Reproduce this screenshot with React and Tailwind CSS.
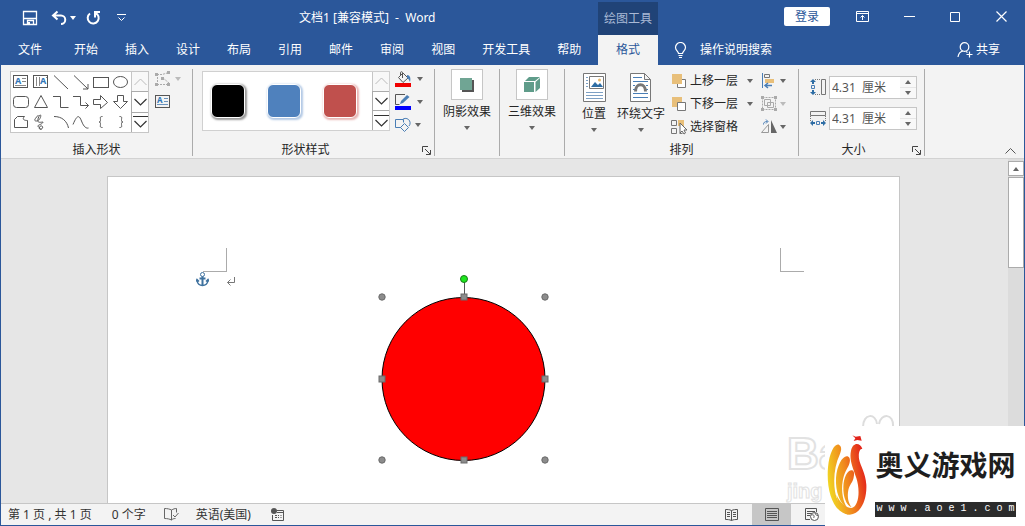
import React from 'react';
import clsx from 'clsx';

const tabs = ['开始', '插入', '设计', '布局', '引用', '邮件', '审阅', '视图', '开发工具', '帮助'];

const Icon = ({ w = 16, h = 16, className, children }) => (
    <svg
        width={w}
        height={h}
        viewBox={`0 0 ${w} ${h}`}
        fill="none"
        stroke="currentColor"
        className={clsx('shrink-0', className)}
        aria-hidden="true"
    >
        {children}
    </svg>
);

const Caret = ({ className = 'text-[#666]' }) => (
    <Icon w={6} h={4} className={className}>
        <path d="M0 0h6L3 4z" fill="currentColor" stroke="none" />
    </Icon>
);

const shapes = [
    { name: '文本框', art: <><rect x="2.5" y="3.5" width="14" height="12" /><text x="4" y="12" fontSize="9" fontWeight="bold" fill="#2e75b6" stroke="none">A</text><path d="M11 6.5h4M11 9.5h4M4 13.5h11" stroke="#888" /></> },
    { name: '竖排文本框', art: <><rect x="2.5" y="3.5" width="14" height="12" /><text x="9" y="12" fontSize="9" fontWeight="bold" fill="#2e75b6" stroke="none">A</text><path d="M5.5 5v9M8.5 5v9M15.5 5v1" stroke="#888" /></> },
    { name: '直线', art: <path d="M3 3.5 17 17" /> },
    { name: '箭头', art: <path d="M3 3.5 17 17M17 12v5h-5" /> },
    { name: '矩形', art: <rect x="2.5" y="5.5" width="15" height="10" /> },
    { name: '椭圆', art: <ellipse cx="9.5" cy="10" rx="7" ry="5.5" /> },
    { name: '圆角矩形', art: <rect x="2.5" y="4.5" width="15" height="11" rx="3" /> },
    { name: '三角形', art: <path d="M10 3.5 16.5 15.5h-13z" /> },
    { name: '肘形连接符', art: <path d="M2 4.5h7.5v11h8" /> },
    { name: '肘形箭头', art: <path d="M2 4.5h7.5v9h8M14.5 10.5l3 3-3 3" /> },
    { name: '右箭头', art: <path d="M2.5 7.5h7v-4l7 7-7 6v-4h-7z" /> },
    { name: '下箭头', art: <path d="M6.500 3.500h6v6h4l-7 7-7-7h4z" /> },
    { name: '任意多边形', art: <path d="M3.500 7.500 6.500 4.500h7c-3 3 0 4 3 4v7h-13z" /> },
    { name: '自由曲线', art: <path d="M7.500 3c-4 4-5 6-2 6s5-5 4-6-4 6-2 7 6-1 4 1-6 2-4 4 3 3 4 1-2-3-3-1 1 3 2 2" /> },
    { name: '弧形', art: <path d="M3 4.500C11 4.500 16 9 17.500 16" /> },
    { name: '曲线', art: <path d="M2 12.500C6 3 8 2.500 10.500 9s5 7.500 7 7" /> },
    { name: '左大括号', art: <path d="M11.500 4.500c-3 0-2 1-2 4 0 1-.5 1.500-1.500 1.500 1 0 1.500.5 1.500 1.500 0 3-1 4 2 4" /> },
    { name: '右大括号', art: <path d="M8.500 4.500c3 0 2 1 2 4 0 1 .5 1.500 1.500 1.500-1 0-1.500.5-1.500 1.500 0 3 1 4-2 4" /> },
];

const swatches = [
    { name: '黑色', className: 'bg-black shadow-[1px_1px_2px_1px_#999]' },
    { name: '蓝色', className: 'bg-[#4f81bd] shadow-[1px_1px_2px_1px_#b3c9e5]' },
    { name: '红色', className: 'bg-[#c0504d] shadow-[1px_1px_2px_1px_#e8b5b4]' },
];

const GalleryScroll = () => (
    <div className="flex w-[17px] flex-col">
        <button aria-label="上一行" className="flex flex-1 items-center justify-center border-l border-[#c6c6c6] bg-[#f8f8f8] text-[#bbb]">
            <Icon w={13} h={8}><path d="M.5 7 6.500 1l6 6" /></Icon>
        </button>
        <button aria-label="下一行" className="flex flex-1 items-center justify-center border border-r-0 border-[#ababab] text-[#333]">
            <Icon w={13} h={8}><path d="M.5 1 6.500 7l6-6" strokeWidth="1.2" /></Icon>
        </button>
        <button aria-label="其他" className="flex flex-1 items-center justify-center border-l border-[#ababab] text-[#333]">
            <Icon w={15} h={14}><path d="M0 1.500h15M1.500 6l6 6 6-6" strokeWidth="1.2" /></Icon>
        </button>
    </div>
);

const Group = ({ label, launcher, className, contentClassName, children }) => (
    <section className={clsx('relative flex shrink-0 flex-col border-r border-[#ababab]', className)}>
        <div className={clsx('flex flex-1', contentClassName)}>{children}</div>
        {label && <h2 className={clsx('h-[13px] text-center leading-[13px]', launcher && 'pr-4')}>{label}</h2>}
        {launcher && (
            <button aria-label={`${label}设置`} className="absolute right-[3px] bottom-px text-[#444]">
                <Icon w={9} h={9}><path d="M.5 6V.5H6M3 3l5 5M8.500 4v4.500H4" /></Icon>
            </button>
        )}
    </section>
);

const EffectButton = ({ label, children }) => (
    <button className="flex w-full flex-col items-center">
        <span className="flex h-[31px] w-8 items-center justify-center border border-[#c6c6c6] bg-white">{children}</span>
        <span className="mt-1 leading-4">{label}</span>
        <span className="mt-1.5"><Caret /></span>
    </button>
);

const BigButton = ({ label, children }) => (
    <button className="flex flex-col items-center self-start pt-1">
        {children}
        <span className="mt-1 leading-4">{label}</span>
        <span className="mt-1.5"><Caret /></span>
    </button>
);

const SizeField = ({ id, label, icon }) => (
    <div className="flex items-center gap-[3px]">
        <label htmlFor={id} aria-label={label}>{icon}</label>
        <div className="flex h-[23px] w-[88px] border border-[#c6c6c6] bg-white">
            <input id={id} defaultValue="4.31  厘米" className="w-0 flex-1 pl-0.5 whitespace-pre text-[#555] outline-none" />
            <div className="flex w-[16px] flex-col bg-[#f8f8f8]">
                <button aria-label={`增大${label}`} className="flex flex-1 items-center justify-center"><Caret className="rotate-180 text-[#666]" /></button>
                <button aria-label={`减小${label}`} className="flex flex-1 items-center justify-center border-t border-[#e6e6e6]"><Caret /></button>
            </div>
        </div>
    </div>
);

const TitleBar = () => (
    <div className="flex h-[34px] text-white">
        <div className="flex w-[298px] items-center pl-[21px]">
            <button aria-label="保存">
                <Icon>
                    <path d="M1.500 1.500h13v13h-13zM1.500 8.500h13M5.500 14.500v-4h6v4" strokeWidth="1.3" />
                    <path d="M6 12h2v2.500H6z" fill="currentColor" stroke="none" />
                </Icon>
            </button>
            <button aria-label="撤消" className="ml-[13px]">
                <Icon w={17}><path d="M2 5.500h8a4 4 0 0 1 0 8.500M6.500 1.500l-4.500 4 4.500 4" strokeWidth="2" /></Icon>
            </button>
            <button aria-label="撤消选项" className="ml-0.5"><Caret className="text-white" /></button>
            <button aria-label="重做" className="ml-[9px]">
                <Icon><path d="M5 3.500a5.500 5.500 0 1 0 5.500-.5M10 7.500V2h5" strokeWidth="2" /></Icon>
            </button>
            <button aria-label="自定义快速访问工具栏" className="ml-4">
                <Icon w={9} h={8}><path d="M0 .5h9M1.500 3.500l3 3 3-3" /></Icon>
            </button>
        </div>
        <h1 className="flex flex-1 items-center whitespace-pre">文档1 [兼容模式]  -  Word</h1>
        <div className="flex w-[426px] items-start">
            <div className="mt-px flex h-[33px] w-[60px] items-center justify-center bg-[#204377] text-[#a9b9d5]">绘图工具</div>
            <div className="ml-auto flex h-[31px] items-center pr-[17px]">
                <button className="h-[19px] w-[46px] rounded-xs bg-white text-[#2b579a]">登录</button>
                <button aria-label="功能区显示选项" className="ml-[26px]">
                    <Icon w={13} h={11}><path d="M.5.500h12v10H.5zM.5 2.500h12M6.500 9V4.500M4.500 6.500l2-2 2 2" /></Icon>
                </button>
                <button aria-label="最小化" className="ml-[35px]"><Icon w={11} h={11}><path d="M0 5.500h11" /></Icon></button>
                <button aria-label="最大化" className="ml-[35px]"><Icon w={10} h={10}><path d="M.5.500h9v9h-9z" /></Icon></button>
                <button aria-label="关闭" className="ml-9"><Icon w={11} h={11}><path d="M.5.500l10 10M10.500.500l-10 10" strokeWidth="1.2" /></Icon></button>
            </div>
        </div>
    </div>
);

const TabBar = () => (
    <nav className="flex h-[30px] items-center text-white">
        <div className="flex flex-1 items-center pl-[17px]">
            <button className="mr-8 shrink-0">文件</button>
            <div className="flex shrink-0 gap-[27px]">
                {tabs.map((tab) => <button key={tab}>{tab}</button>)}
            </div>
        </div>
        <div className="flex h-full w-[426px] items-center">
            <button className="h-full w-[60px] bg-[#f3f3f3] text-[#2b579a]">格式</button>
            <button className="ml-4 flex items-center gap-[13px]">
                <Icon w={13} h={17}>
                    <path d="M4.500 11.500c0-2-3-3-3-6a5 5 0 0 1 10 0c0 3-3 4-3 6zM4.500 13.500h4M5 15.500h3" strokeWidth="1.2" />
                </Icon>
                <span>操作说明搜索</span>
            </button>
            <button className="mr-6 ml-auto flex items-center gap-[3px]">
                <Icon>
                    <circle cx="7.500" cy="5" r="4.300" strokeWidth="1.2" />
                    <path d="M1 15c.5-3.500 2.500-5.500 5-6M9 9.500l1.500 1M12.500 9.500v6M9.500 12.500h6" strokeWidth="1.2" />
                </Icon>
                共享
            </button>
        </div>
    </nav>
);

const ArrangeRow = ({ label, caret, children }) => (
    <button className="flex h-[23px] items-center">
        {children}
        <span className="ml-[3px] w-[57px] text-left">{label}</span>
        {caret && <Caret />}
    </button>
);

const Ribbon = () => (
    <div className="flex border-b border-[#d2d2d2] bg-[#f3f3f3] pt-1 pb-0.5 text-[#262626]">
        <Group label="插入形状" className="h-[87px] w-[192px]" contentClassName="pl-[9px]">
            <div className="mt-0.5 flex h-[62px] self-start border border-[#c6c6c6] bg-white">
                <div className="grid grid-cols-6">
                    {shapes.map((shape) => (
                        <button key={shape.name} aria-label={shape.name} className="size-5 text-[#555]">
                            <Icon w={20} h={20}>{shape.art}</Icon>
                        </button>
                    ))}
                </div>
                <GalleryScroll />
            </div>
            <div className="ml-1.5 flex flex-col gap-2 pt-0.5">
                <button aria-label="编辑形状" className="flex items-center gap-[3px] text-[#aaa]">
                    <Icon w={17}>
                        <path d="M2 3.500h5l7-2M2 13.500h12M2.500 3v10M8 7l6 5" strokeDasharray="2 1" />
                        <path d="M0 2h3v3H0zM12 0h3v3h-3zM0 12h3v3H0zM12 12h3v3h-3zM6 6h3v3H6z" fill="currentColor" stroke="none" />
                    </Icon>
                    <Caret className="text-[#bbb]" />
                </button>
                <button aria-label="绘制文本框" className="self-start text-[#555]">
                    <Icon w={15} h={13}>
                        <rect x=".5" y=".5" width="14" height="12" />
                        <text x="2" y="8" fontSize="8" fontWeight="bold" fill="#2e75b6" stroke="none">A</text>
                        <path d="M9 3.500h4M9 6.500h4M2 9.500h11" stroke="#6b93bd" />
                    </Icon>
                </button>
            </div>
        </Group>

        <Group label="形状样式" launcher className="w-[242px]" contentClassName="pl-[9px]">
            <div className="mt-0.5 flex h-[60px] self-start border border-[#d0d0d0] bg-white">
                <div className="flex w-[169px] items-center gap-[22px] pl-2">
                    {swatches.map((s) => (
                        <button key={s.name} aria-label={s.name} className={clsx('size-[34px] rounded-md border border-white', s.className)} />
                    ))}
                </div>
                <GalleryScroll />
            </div>
            <div className="ml-[5px] flex flex-col gap-[7px] pt-0.5">
                <button aria-label="形状填充" className="flex items-center gap-1.5">
                    <Icon w={16}>
                        <path d="M3.500 6.500 8 2l5 5-5 4.500zM7.500 7V1.500c0-1-2-1-2 0V5" stroke="#555" />
                        <path d="M12 4c3 0 4 3 3 7-1-2-1-3-3-4z" fill="#4a7eb5" stroke="none" />
                        <path d="M0 12h16v4H0z" fill="#f00000" stroke="none" />
                    </Icon>
                    <Caret />
                </button>
                <button aria-label="形状轮廓" className="flex items-center gap-1.5">
                    <Icon w={16}>
                        <path d="M10 .5H.5v10h4" stroke="#555" />
                        <path d="M5 10 6 7l6-6 2.500 2L8 9z" fill="#4a7eb5" stroke="none" />
                        <path d="M0 12h16v4H0z" fill="#00f" stroke="none" />
                    </Icon>
                    <Caret />
                </button>
                <button aria-label="更改形状" className="flex items-center gap-1">
                    <Icon w={16} className="text-[#4a7eb5]">
                        <path d="M6 10.500H.5v-8h8v3M7 3a4.500 4.500 0 1 1 7 6" />
                        <path d="M9.500 6.500l4 4-4 4-4-4z" />
                    </Icon>
                    <Caret />
                </button>
            </div>
        </Group>

        <Group className="w-[65px]">
            <EffectButton label="阴影效果">
                <Icon w={14} h={14}>
                    <path d="M2 2h12v12H2z" fill="#555" stroke="none" />
                    <path d="M0 0h12v12H0z" fill="#70a594" stroke="none" />
                </Icon>
            </EffectButton>
        </Group>
        <Group className="w-[65px]">
            <EffectButton label="三维效果">
                <Icon>
                    <path d="M0 5h10v10H0zM1 4l4-4h11l-5 4zM11.500 5 16 1v10l-4.500 4z" fill="#5f9c8a" stroke="none" />
                </Icon>
            </EffectButton>
        </Group>

        <Group label="排列" className="w-[234px]">
            <div className="flex gap-[11px] pl-[17px]">
                <BigButton label="位置">
                    <Icon w={23} h={29}>
                        <path d="M.5.500h22v28H.5z" fill="#fff" stroke="#777" />
                        <path d="M3 4.500h2M3 7.500h2M3 10.500h2M3 13.500h2M3 19.500h17M3 22.500h17M3 25.500h17" stroke="#7da0c4" />
                        <path d="M6.500 3.500h14v12h-14z" stroke="#777" />
                        <path d="M8 14l4-5 3 3 2-2 3 4z" fill="#2e6da4" stroke="none" />
                        <circle cx="16.500" cy="7" r="1.500" fill="#e8b96b" stroke="none" />
                    </Icon>
                </BigButton>
                <BigButton label="环绕文字">
                    <Icon w={22} h={29}>
                        <path d="M.5.500h14l6 6v22H.5zM14.500.500v6h6" fill="#fff" stroke="#777" />
                        <path d="M3 4.500h9M3 8.500h15M3 12.500h2M16 12.500h2M3 16.500h2M16 16.500h2M3 20.500h15M3 24.500h15" stroke="#4a7eb5" />
                        <path d="M5.500 18.500c0-9 10-9 10 0" stroke="#777" strokeWidth="3" />
                    </Icon>
                </BigButton>
            </div>
            <div className="ml-1.5 flex flex-col">
                <ArrangeRow label="上移一层" caret>
                    <Icon>
                        <path d="M6.500 6.500h8v8h-8z" stroke="#777" fill="#fff" />
                        <path d="M1 1h10v10H1z" fill="#e8bf7a" stroke="none" />
                    </Icon>
                </ArrangeRow>
                <ArrangeRow label="下移一层" caret>
                    <Icon>
                        <path d="M1 1h10v10H1z" fill="#e8bf7a" stroke="none" />
                        <path d="M6.500 6.500h8v8h-8z" stroke="#777" fill="#fff" />
                    </Icon>
                </ArrangeRow>
                <ArrangeRow label="选择窗格">
                    <Icon>
                        <path d="M.5 1.500h5v5h-5zM.5 9.500h5v5h-5zM8.500 14.500h3" stroke="#777" />
                        <path d="M7 1h6v6H7z" fill="#e8bf7a" stroke="none" />
                        <path d="M9 4v10l2-2 2 3 1.500-1-1.500-3h3z" fill="#fff" stroke="#666" />
                    </Icon>
                </ArrangeRow>
            </div>
            <div className="ml-2 flex flex-col text-[#4a7eb5]">
                <button aria-label="对齐" className="flex h-[23px] items-center gap-[3px]">
                    <Icon>
                        <path d="M1.500 0v15" stroke="#4a7eb5" />
                        <path d="M3.500 1.500h5v3h-5z" stroke="#777" />
                        <path d="M4 6h9v4H4z" fill="#e8bf7a" stroke="none" />
                        <path d="M4 12.500h7M7 10l-3 2.500L7 15" strokeWidth="1.500" />
                    </Icon>
                    <Caret />
                </button>
                <button aria-label="组合" className="flex h-[23px] items-center gap-[3px] text-[#aaa]">
                    <Icon>
                        <path d="M1.500 1.500h13v12h-13z" strokeDasharray="2 1" />
                        <path d="M3.500 3.500h6v6h-6zM6.500 6.500h6v5h-6z" />
                        <path d="M0 0h3v3H0zM13 0h3v3h-3zM0 12h3v3H0zM13 12h3v3h-3z" fill="currentColor" stroke="none" />
                    </Icon>
                    <Caret className="text-[#bbb]" />
                </button>
                <button aria-label="旋转" className="flex h-[23px] items-center gap-[3px]">
                    <Icon>
                        <path d="M7.500 5.500v8H.5z" stroke="#999" />
                        <path d="M10 1v13h6z" fill="#666" stroke="none" />
                        <path d="M2.500 5.500c0-2 1-3 4-3M5 .5l2 2-2 2" />
                    </Icon>
                    <Caret />
                </button>
            </div>
        </Group>

        <Group label="大小" launcher className="w-[126px]" contentClassName="pl-[11px]">
            <div className="flex flex-col gap-2 pt-[7px]">
                <SizeField
                    id="shape-height"
                    label="高度"
                    icon={
                        <Icon h={17}>
                            <path d="M11.500.500h4v15h-4z" stroke="#777" />
                            <path d="M5 .5h6M5 15.500h6" stroke="#777" strokeDasharray="1 1" />
                            <path d="M1.500 6.500h3v3h-3z" stroke="#4a7eb5" />
                            <path d="M3 0l3 3H4v2H2V3H0zM3 16l3-3H4v-2H2v2H0z" fill="#2e6da4" stroke="none" />
                        </Icon>
                    }
                />
                <SizeField
                    id="shape-width"
                    label="宽度"
                    icon={
                        <Icon h={17}>
                            <path d="M.5 1.500h15v4H.5z" stroke="#777" />
                            <path d="M.5 6v6M15.500 6v6" stroke="#777" strokeDasharray="1 1" />
                            <path d="M6.500 11.500h3v3h-3z" stroke="#4a7eb5" />
                            <path d="M0 13l3-3v2h2v2H3v2zM16 13l-3-3v2h-2v2h2v2z" fill="#2e6da4" stroke="none" />
                        </Icon>
                    }
                />
            </div>
        </Group>

        <button aria-label="折叠功能区" className="mt-auto mr-2 mb-0.5 ml-auto text-[#555]">
            <Icon w={11} h={6}><path d="M.5 5.500l5-5 5 5" /></Icon>
        </button>
    </div>
);

const corners = [[6, 25], [169, 25], [6, 188], [169, 188]];
const edges = [[88, 25], [6, 107], [169, 107], [88, 188]];

const SelectedCircle = () => (
    <Icon w={175} h={194} className="absolute top-[95px] left-[268px]">
        <circle cx="87.500" cy="107" r="81.500" fill="#f00" stroke="#000" />
        <path d="M88.500 8v16" stroke="#555" />
        <circle cx="88" cy="7" r="3.500" fill="#1ee61e" stroke="#1a7a1a" />
        {corners.map(([x, y]) => <circle key={`${x}-${y}`} cx={x} cy={y} r="3.200" fill="#8c8c8c" stroke="#6a6a6a" />)}
        {edges.map(([x, y]) => <rect key={`${x}-${y}`} x={x - 3} y={y - 3} width="6" height="6" fill="#8c8c8c" stroke="#6a6a6a" />)}
    </Icon>
);

const Document = () => (
    <main className="flex min-h-0 flex-1 bg-[#e6e6e6]">
        <div className="flex min-w-0 flex-1 justify-center overflow-hidden pt-[17px] pr-0.5">
            <article className="relative w-full max-w-[793px] border border-b-0 border-[#c6c6c6] bg-white">
                <div className="flex justify-between px-[95px] pt-[71px]">
                    <div className="h-6 w-6 border-r border-b border-[#ababab]" />
                    <div className="h-6 w-6 border-b border-l border-[#ababab]" />
                </div>
                <div className="flex items-center gap-[18px] pl-[88px] text-[#777]">
                    <Icon w={13} h={15} className="text-[#3f729f]">
                        <circle cx="6.500" cy="2.500" r="2" />
                        <path d="M6.500 4.500v9M3.500 6.500h6" strokeWidth="2" />
                        <path d="M1 8.500c.5 3 2.500 5 5.500 5s5-2 5.500-5M0 9.500l1-2 2 2M13 9.500l-1-2-2 2" strokeWidth="1.500" />
                    </Icon>
                    <Icon w={9} h={9} className="mt-1"><path d="M7.500 0v5.500h-7M3.500 2.500l-3 3 3 3" /></Icon>
                </div>
                <SelectedCircle />
                <Icon w={34} h={12} className="absolute right-[4px] bottom-[76px] text-[#ddd]">
                    <path d="M2 12C2-2 15-2 16 9M18 9C20-2 33-2 32 12" strokeWidth="2" />
                </Icon>
                <div className="absolute right-[56px] bottom-0 w-[56px] font-['Liberation_Sans'] font-bold whitespace-nowrap text-white">
                    <div className="text-[44px] leading-[50px] [-webkit-text-stroke:2px_#e2e2e2]">Ba</div>
                    <div className="text-[20px] leading-6 [-webkit-text-stroke:1px_#e2e2e2]">jing</div>
                </div>
            </article>
        </div>
        <div className="flex w-4 flex-col bg-[#dcdcdc] pt-0.5">
            <button aria-label="向上滚动" className="flex h-[15px] items-center justify-center border border-[#ababab] bg-white">
                <Caret className="rotate-180 text-[#666]" />
            </button>
            <div className="mt-px h-[91px] border border-[#ababab] bg-white" />
        </div>
    </main>
);

const StatusBar = () => (
    <footer className="flex h-[22px] items-center border-t border-[#c6c6c6] bg-[#f3f3f3] pl-[7px] text-[#333]">
        <span className="whitespace-pre">第 1 页 , 共 1 页</span>
        <span className="ml-5">0 个字</span>
        <button aria-label="校对" className="ml-[18px] text-[#666]">
            <Icon w={15} h={13}><path d="M7.500 12V2c-2-1-4-1.500-7-1.500v10c3 0 5 .5 7 1.500 1-1 2-1.500 4-1.500M7.500 2c2-1 3-1.500 5-1.500v4M9 7l2 2 3.500-4" /></Icon>
        </button>
        <button className="ml-[17px]">英语(美国)</button>
        <button aria-label="宏录制" className="ml-5 text-[#555]">
            <Icon w={13} h={13}>
                <path d="M6 2.500h6.500v10H1.500V7M4 7.500h2M7 7.500h1M9.500 7.500h1M4 9.500h2M7 9.500h1M9.500 9.500h1M6 4.500h6" />
                <circle cx="3" cy="3" r="3" fill="currentColor" stroke="none" />
            </Icon>
        </button>
        <div className="mr-[205px] ml-auto flex h-full items-center text-[#555]">
            <button aria-label="阅读视图" className="px-3.5">
                <Icon w={13} h={12}><path d="M6.500 11.500v-10c-2-1-4-1-6-1v10c2 0 4 0 6 1 2-1 4-1 6-1v-10c-2 0-4 0-6 1M2 3.500h3M2 5.500h3M2 7.500h3M8 3.500h3M8 5.500h3M8 7.500h3" /></Icon>
            </button>
            <button aria-label="页面视图" className="flex h-full w-[39px] items-center justify-center bg-[#c6c6c6]">
                <Icon w={14} h={13}><path d="M.5.500h13v12H.5zM2 3.500h10M2 5.500h10M2 7.500h10M2 9.500h10" /></Icon>
            </button>
            <button aria-label="Web 版式视图" className="ml-3.5">
                <Icon w={14} h={13}>
                    <path d="M5 11.500H.5V.500h11V4M2 3.500h8M2 5.500h5M2 7.500h3" />
                    <circle cx="9.500" cy="8.500" r="4" fill="#fff" />
                    <path d="M6.500 7c3-1 3 2 2 3M10 5c0 2 2 2 3 3" />
                </Icon>
            </button>
        </div>
    </footer>
);

const SiteLogo = () => (
    <div className="absolute right-0 bottom-0 flex h-[100px] w-[200px] bg-white">
        <svg viewBox="0 0 150 276" className="mt-0.5 h-[92px] w-[50px] shrink-0" aria-hidden="true">
            <defs>
                <linearGradient id="flame" gradientUnits="userSpaceOnUse" x1="8" y1="150" x2="120" y2="130">
                    <stop offset="0" stopColor="#f1d424" />
                    <stop offset=".5" stopColor="#f0871d" />
                    <stop offset="1" stopColor="#e4261a" />
                </linearGradient>
            </defs>
            <g fill="url(#flame)">
                <path d="M46 54C36 38 14 62 9 118C3 190 26 256 72 260C56 246 36 226 30 190C24 150 30 110 44 80C49 68 50 60 46 54Z" />
                <path d="M70 86C56 78 36 108 33 150C31 190 44 226 68 242C54 222 48 190 53 160C57 134 66 124 72 110C76 100 76 90 70 86Z" />
                <path d="M84 128C70 122 56 146 55 176C54 206 64 232 80 238C70 226 66 206 70 186C74 170 84 162 86 148C88 138 88 131 84 128Z" />
                <path d="M112 62C106 44 84 40 78 68C72 96 84 120 94 150C106 186 102 234 80 240C62 240 44 222 34 200C40 240 56 260 74 260C108 258 126 214 124 170C122 134 106 114 102 92C100 74 104 62 112 62Z" />
            </g>
            <path d="M82 22l10 4 14-2 4 14-13-2-11 3 5-8z" fill="#e2231a" />
        </svg>
        <div className="flex flex-1 flex-col justify-between pt-3.5 pr-[9px] pb-[9px]">
            <p className="text-center text-[28px] leading-[50px] font-bold whitespace-nowrap text-[#1e1e1e]">奥义游戏网</p>
            <p className="h-[15px] bg-[#2b2b2b] text-center font-['Liberation_Mono'] text-[10px] leading-[14px] whitespace-nowrap text-white">w w w . a o e 1 . c o m</p>
        </div>
    </div>
);

const App = () => (
    <div className="relative flex h-screen flex-col overflow-hidden bg-[#2b579a] p-px font-['Noto_Sans','Noto_Sans_CJK_SC',sans-serif] text-xs">
        <header className="shrink-0">
            <TitleBar />
            <TabBar />
            <Ribbon />
        </header>
        <Document />
        <StatusBar />
        <SiteLogo />
    </div>
);

export default App;
